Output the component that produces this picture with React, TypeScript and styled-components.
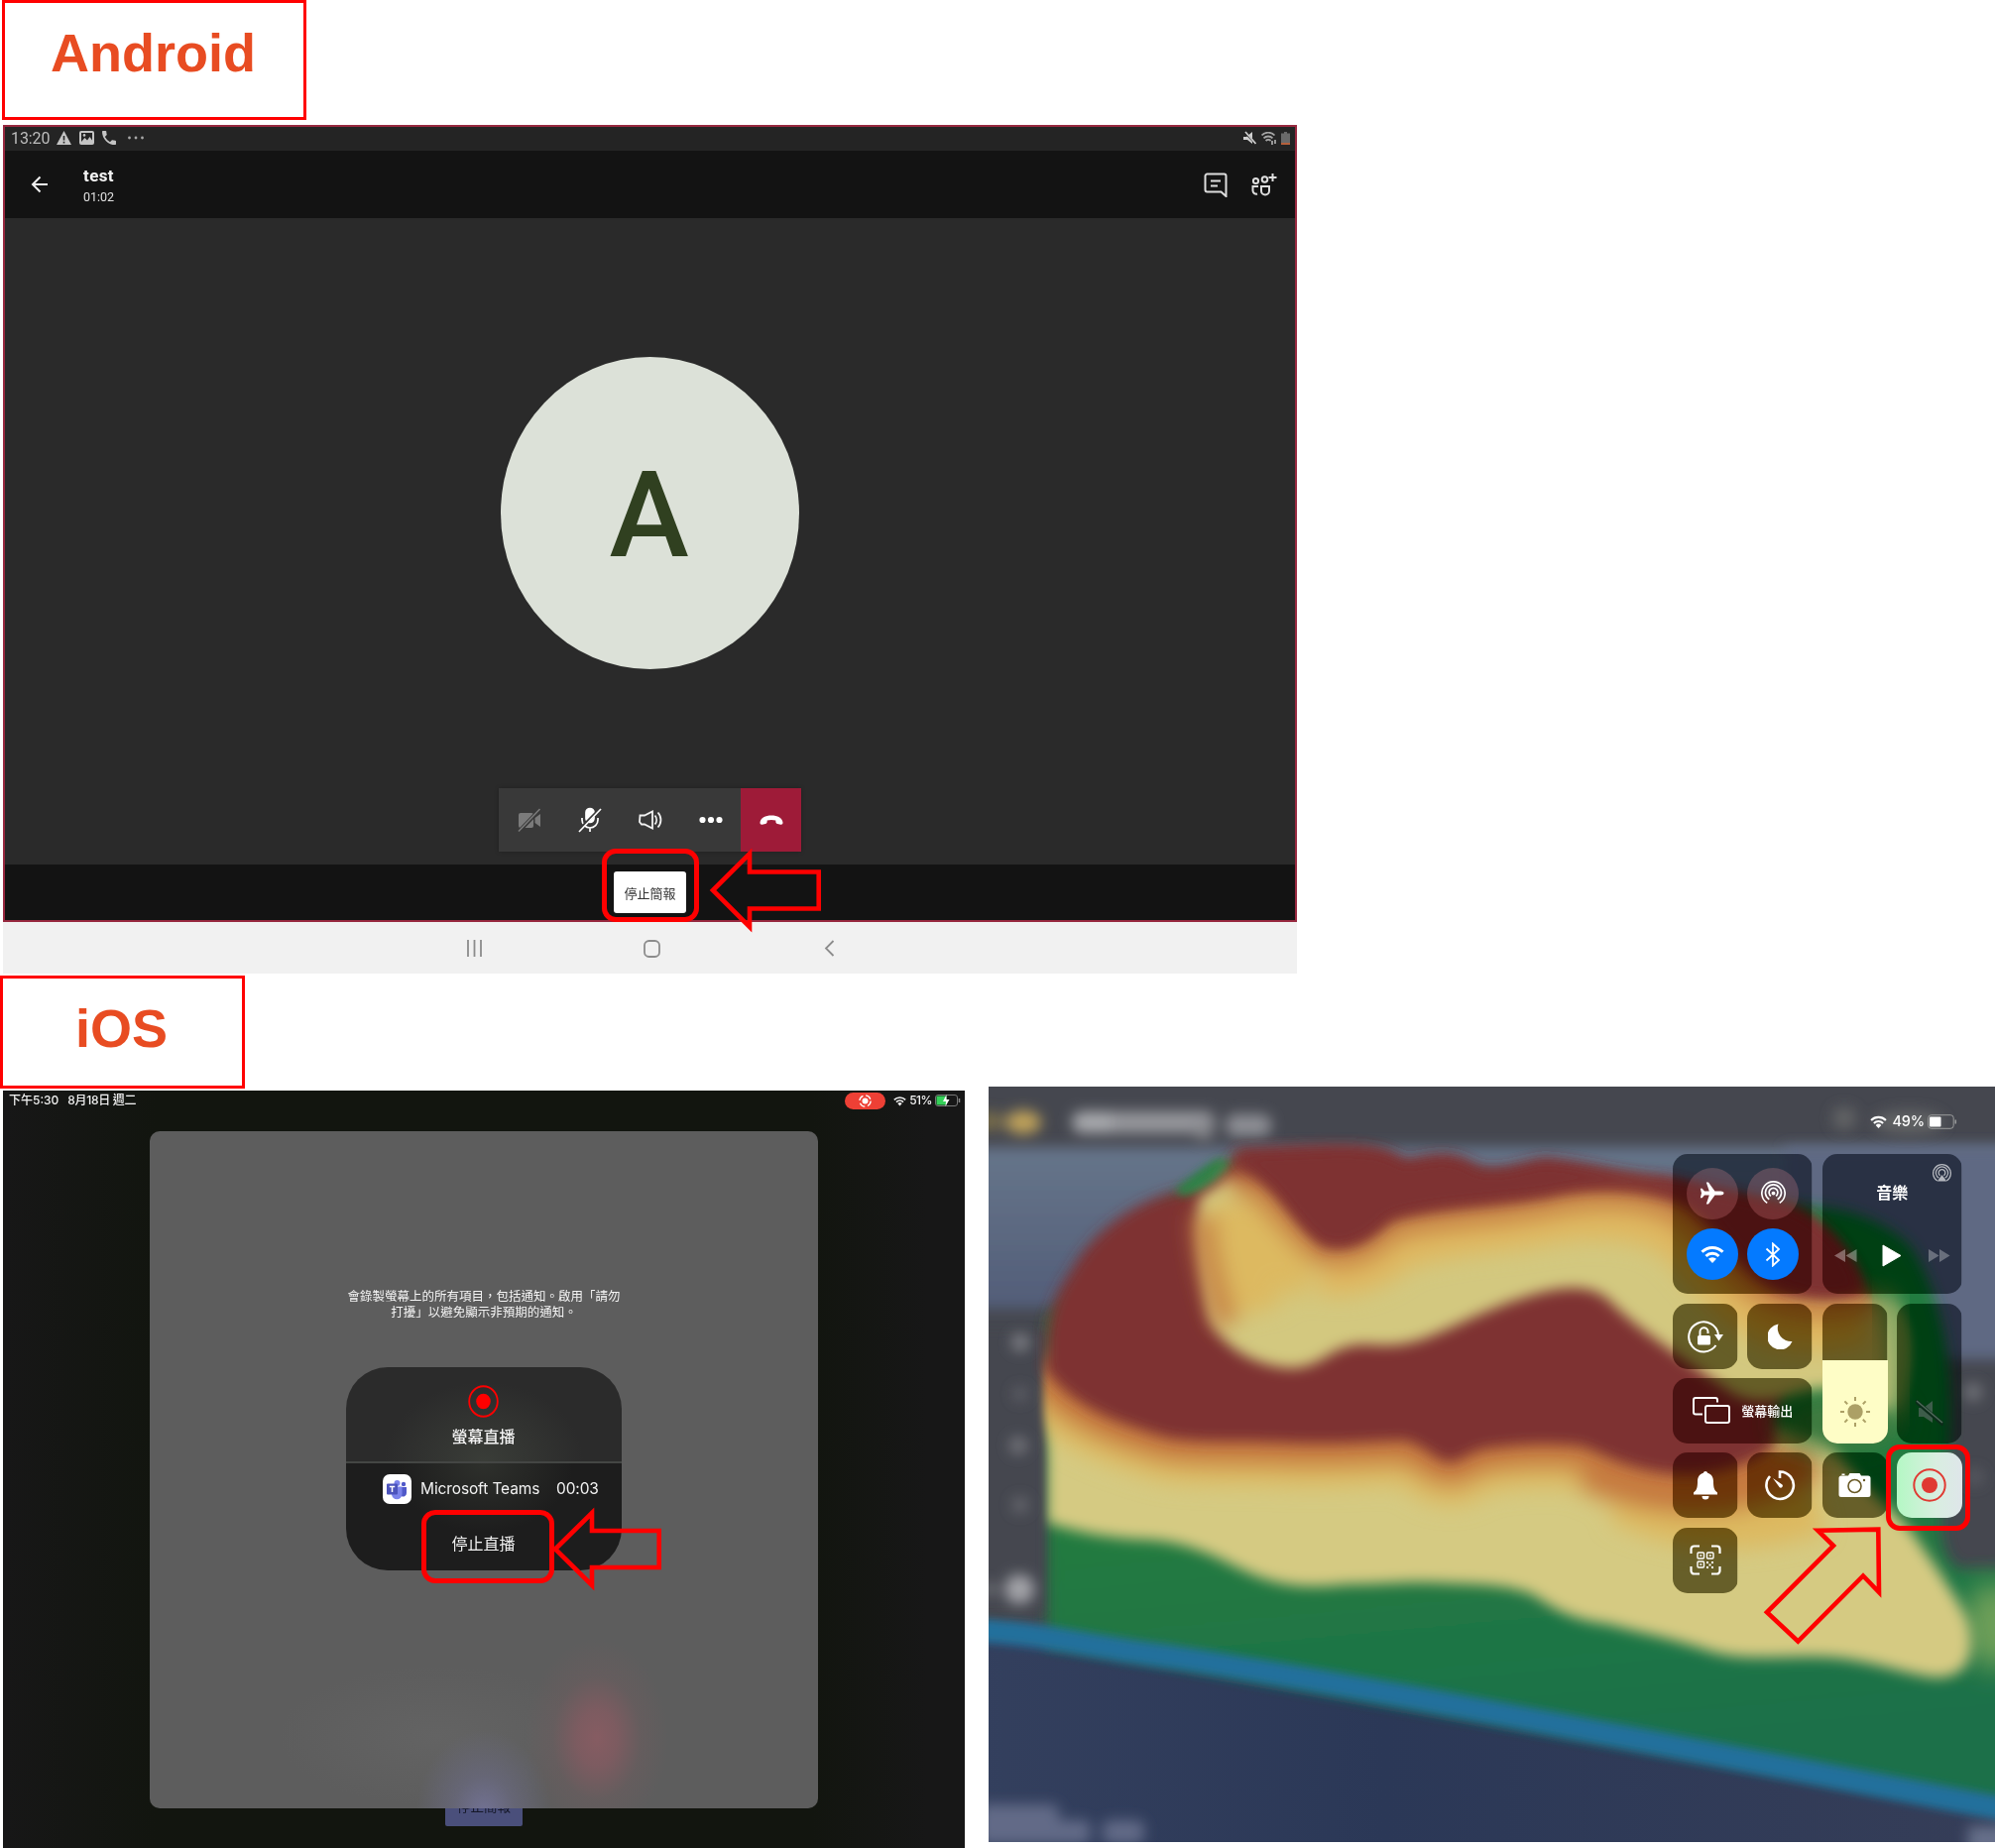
import React from "react";
import styled, { createGlobalStyle } from "styled-components";

const CJK = `"Noto Sans CJK TC", sans-serif`;

const GlobalStyle = createGlobalStyle`
  * { box-sizing: border-box; }
  body { margin: 0; background: #fff; font-family: Roboto, ${CJK}; }
  svg { display: block; flex: none; }
`;

const Page = styled.main`
  width: 2012px;
  height: 1864px;
  display: flex;
  flex-direction: column;
  align-items: flex-start;
  overflow: hidden;
  background: #fff;
`;

const PlatformLabel = styled.h1<{ $w: number; $h: number; $ml: number; $mt: number }>`
  flex: none;
  width: ${(p) => p.$w}px;
  height: ${(p) => p.$h}px;
  margin: ${(p) => p.$mt}px 0 0 ${(p) => p.$ml}px;
  padding: 20px 2px 0 0;
  border: 3px solid #ff0000;
  color: #e84c22;
  font: bold 54px/60px "Liberation Sans", Arial, sans-serif;
  text-align: center;
`;

/* ---------- Annotations ---------- */

const Highlight = styled.div<{ $x: number; $y: number; $w: number; $h: number }>`
  position: absolute;
  z-index: 2;
  left: ${(p) => p.$x}px;
  top: ${(p) => p.$y}px;
  width: ${(p) => p.$w}px;
  height: ${(p) => p.$h}px;
  border: 5px solid #ff0000;
  border-radius: 14px;
`;

const ArrowSvg = styled.svg<{ $x: number; $y: number }>`
  position: absolute;
  z-index: 2;
  left: ${(p) => p.$x}px;
  top: ${(p) => p.$y}px;
  fill: none;
  stroke: #ff0000;
  stroke-width: 4.6;
`;

/* ---------- Android ---------- */

const AndroidShot = styled.section`
  position: relative;
  flex: none;
  width: 1305px;
  height: 856px;
  margin: 5px 0 0 3px;
  display: flex;
  flex-direction: column;
`;

const CallScreen = styled.div`
  height: 804px;
  border: 2px solid #97283f;
  display: flex;
  flex-direction: column;
  background: #2a2a2a;
`;

const StatusBar = styled.div`
  height: 24px;
  padding: 0 5px 2px 6px;
  display: flex;
  align-items: center;
  background: #242424;
  color: #bdbdbd;
  font-size: 16px;
  letter-spacing: -0.1px;
`;

const StatusIcons = styled.div<{ $gap: number; $ml: string }>`
  display: flex;
  align-items: center;
  gap: ${(p) => p.$gap}px;
  margin-left: ${(p) => p.$ml};
`;

const CallHeader = styled.header`
  height: 68px;
  padding: 0 18px 0 26px;
  display: flex;
  align-items: center;
  background: #131313;
  color: #f4f4f4;
`;

const CallTitle = styled.div`
  flex: 1;
  margin-left: 35px;
  padding-top: 2px;
  display: flex;
  flex-direction: column;
`;

const CallName = styled.strong`
  font-size: 17px;
  line-height: 22px;
  letter-spacing: 0.4px;
`;

const CallTime = styled.span`
  font-size: 12.5px;
  line-height: 21px;
  color: #e0e0e0;
`;

const HeaderActions = styled.div`
  display: flex;
  gap: 23px;
`;

const CallBody = styled.div`
  flex: 1;
  display: flex;
  flex-direction: column;
  align-items: center;
  padding-top: 140px;
`;

const Avatar = styled.div`
  width: 301px;
  height: 315px;
  border-radius: 50%;
  background: #dce1d8;
  color: #304020;
  display: flex;
  align-items: center;
  justify-content: center;
  font-size: 121px;
  font-weight: 500;
  line-height: 1;
  padding: 5px 2px 0 0;
`;

const CallControls = styled.div`
  margin-top: 120px;
  display: flex;
  width: 305px;
  height: 64px;
  background: #393939;
  box-shadow: 0 0 4px rgba(0, 0, 0, 0.25);
`;

const ControlButton = styled.div<{ $danger?: boolean }>`
  width: 61px;
  display: flex;
  align-items: center;
  justify-content: center;
  background: ${(p) => (p.$danger ? "#9e1b38" : "transparent")};
`;

const PresentBar = styled.div`
  height: 56px;
  display: flex;
  justify-content: center;
  padding-top: 7px;
  background: #131313;
`;

const StopPresenting = styled.div`
  width: 73px;
  height: 42px;
  border-radius: 3px;
  background: #fff;
  color: #333;
  font: 13px/43px ${CJK};
  text-align: center;
`;

const NavBar = styled.nav`
  flex: 1;
  padding: 1px 0 0 3px;
  display: flex;
  align-items: center;
  justify-content: center;
  gap: 162px;
  background: #f1f1f1;
`;

/* ---------- iOS ---------- */

const IosRow = styled.div`
  display: flex;
  align-items: flex-start;
  height: 768px;
  flex: none;
`;

const BroadcastShot = styled.section`
  position: relative;
  width: 970px;
  height: 764px;
  margin: 2px 0 0 3px;
  display: flex;
  flex-direction: column;
  align-items: center;
  background: linear-gradient(90deg, #171717 0%, #12150f 16%, #12150f 84%, #171717 96%);
  overflow: hidden;
`;

const IosStatus = styled.div`
  align-self: stretch;
  height: 41px;
  padding: 1px 4px 0 6px;
  display: flex;
  align-items: flex-start;
  color: #f2f2f2;
  font: 500 12px/18px Inter, ${CJK};
`;

const IosDate = styled.span`
  margin-left: 9px;
  letter-spacing: -0.3px;
`;

const IosStatusRight = styled.div`
  margin-left: auto;
  height: 18px;
  display: flex;
  align-items: center;
  font-size: 12px;
  letter-spacing: -0.5px;
`;

const RecordPill = styled.div`
  width: 41px;
  height: 17px;
  margin-right: 8px;
  border-radius: 9px;
  background: #ee4035;
  display: flex;
  align-items: center;
  justify-content: center;
`;

const Sheet = styled.div`
  position: relative;
  z-index: 1;
  width: 674px;
  height: 683px;
  border-radius: 10px;
  display: flex;
  flex-direction: column;
  align-items: center;
  padding-top: 158px;
  background:
    radial-gradient(72px 100px at 451px 612px, rgba(134, 92, 98, 1) 0%, rgba(130, 91, 97, 0.85) 28%, rgba(112, 92, 94, 0.4) 62%, transparent 100%),
    radial-gradient(68px 84px at 337px 688px, rgba(114, 114, 148, 1) 0%, rgba(106, 106, 130, 0.65) 45%, transparent 100%),
    radial-gradient(160px 70px at 290px 610px, #636363, transparent),
    #5d5d5d;
`;

const Notice = styled.p`
  margin: 0;
  color: #f4f4f4;
  font: 12.5px/16px ${CJK};
  text-align: center;
  white-space: nowrap;
`;

const Card = styled.div`
  width: 278px;
  height: 205px;
  margin-top: 48px;
  border-radius: 42px;
  overflow: hidden;
  display: flex;
  flex-direction: column;
  color: #f2f2f2;
`;

const CardTop = styled.div`
  height: 97px;
  padding: 18px 1px 0 0;
  border-bottom: 2px solid #444644;
  display: flex;
  flex-direction: column;
  align-items: center;
  gap: 6px;
  background: radial-gradient(100px 80px at 50% 100%, #3a3d38, #2b2b2b);
  font: 500 16px/25px ${CJK};
`;

const CardBottom = styled.div`
  flex: 1;
  display: flex;
  flex-direction: column;
  align-items: center;
  background: radial-gradient(90px 70px at 50% 0, #2e302c, #1d1d1d);
  font: 16px/24px ${CJK};
`;

const AppRow = styled.div`
  align-self: stretch;
  height: 50px;
  padding: 1px 0 0 37px;
  display: flex;
  align-items: center;
  font: 15.5px/20px Inter, sans-serif;
  letter-spacing: -0.12px;
`;

const AppName = styled.span`
  margin-left: 9px;
  width: 137px;
`;

const StopBroadcast = styled.div`
  margin: 18px 1px 0 0;
`;

const PurpleButton = styled.div`
  width: 78px;
  height: 34px;
  margin-top: -16px;
  border-radius: 2px;
  background: #4a4f7b;
  color: #151829;
  font: 13.5px/20px ${CJK};
  text-align: center;
  padding-top: 3px;
`;

const ControlShot = styled.section`
  position: relative;
  width: 1015px;
  height: 762px;
  margin: -2px 0 0 24px;
  overflow: hidden;
  display: flex;
  flex-direction: column;
  align-items: flex-end;
`;

const Backdrop = styled.svg`
  position: absolute;
  inset: 0;
`;

const ControlStatus = styled.div`
  position: relative;
  height: 68px;
  padding: 2px 38px 0 0;
  display: flex;
  align-items: center;
  color: #fff;
  font: 500 14.5px/20px Inter, sans-serif;
  letter-spacing: -0.2px;
`;

const Percent = styled.span<{ $gap: number }>`
  margin: 0 3px 0 ${(p) => p.$gap}px;
`;

const ControlGrid = styled.div`
  position: relative;
  margin-right: 33px;
  display: grid;
  grid-template-columns: repeat(4, 66px);
  grid-auto-rows: 66px;
  gap: 9.33px;
`;

const Tile = styled.div<{ $cols?: number; $rows?: number; $light?: boolean }>`
  grid-column: span ${(p) => p.$cols ?? 1};
  grid-row: span ${(p) => p.$rows ?? 1};
  border-radius: 15px;
  overflow: hidden;
  display: flex;
  align-items: center;
  justify-content: center;
  color: #fff;
  background: ${(p) => (p.$light ? "linear-gradient(90deg, #b4f8c4, #d8eee0 60%, #dfe6ea)" : "rgba(0,0,0,0.1)")};
  backdrop-filter: ${(p) => (p.$light ? "none" : "brightness(0.52) saturate(1.6)")};
`;

const RoundGrid = styled.div`
  display: grid;
  grid-template-columns: 52px 52px;
  gap: 9.5px;
`;

const Round = styled.div<{ $on?: boolean }>`
  width: 52px;
  height: 52px;
  border-radius: 50%;
  display: flex;
  align-items: center;
  justify-content: center;
  background: ${(p) => (p.$on ? "#047aff" : "rgba(255, 150, 160, 0.22)")};
`;

const Music = styled.div`
  align-self: stretch;
  flex: 1;
  display: flex;
  flex-direction: column;
  padding: 10px 12px 27px;
`;

const MusicTitle = styled.div`
  font: 700 16px/24px ${CJK};
  text-align: center;
  margin-top: -3px;
`;

const AirplayRow = styled.div`
  display: flex;
  justify-content: flex-end;
  margin-right: -1px;
`;

const Transport = styled.div`
  margin-top: auto;
  display: flex;
  justify-content: space-between;
  align-items: center;
`;

const Slider = styled.div<{ $fill: number }>`
  align-self: stretch;
  flex: 1;
  display: flex;
  align-items: flex-end;
  justify-content: center;
  padding-bottom: 16px;
  background: linear-gradient(to top, #fefdc6 ${(p) => p.$fill}px, transparent ${(p) => p.$fill}px);
`;

const MirrorText = styled.span`
  margin-left: 11px;
  font: 500 13px/20px ${CJK};
`;

const LeftArrow = ({ x, y, w, h }: { x: number; y: number; w: number; h: number }) => (
  <ArrowSvg $x={x} $y={y} width={w + 4} height={h + 4} viewBox={`0 0 ${w + 4} ${h + 4}`}>
    <path
      d={`M4 ${h / 2} L41 6 V${h / 2 - 18.5} H${w - 2.3} V${h / 2 + 18.5} H41 V${h - 6} Z`}
    />
  </ArrowSvg>
);

const WifiIcon = ({ w, h }: { w: number; h: number }) => (
  <svg width={w} height={h} viewBox="0 0 24 18" fill="none" stroke="currentColor" strokeWidth="3">
    <path d="M1.5 6.8a15 15 0 0 1 21 0M5.5 11a9.3 9.3 0 0 1 13 0" />
    <path d="M12 18l-4-4.2a5.8 5.8 0 0 1 8 0z" fill="currentColor" stroke="none" />
  </svg>
);

const RecordIcon = ({ w, h, color }: { w: number; h: number; color: string }) => (
  <svg width={w} height={h} viewBox="0 0 34 34" preserveAspectRatio="none">
    <circle cx="17" cy="17" r="15.7" fill="none" stroke={color} strokeWidth="2" />
    <circle cx="17" cy="17" r="8" fill={color} />
  </svg>
);

const Rings = ({ size, play }: { size: number; play?: boolean }) => (
  <svg width={size} height={size} viewBox="0 0 24 24" fill="none" stroke="currentColor" strokeWidth="1.6" opacity={play ? 0.65 : 1}>
    <path d="M6 21.5a11.2 11.2 0 1 1 12 0M8 18a7.7 7.7 0 1 1 8 0M9.6 14.8a4.2 4.2 0 1 1 4.8 0" />
    {play ? <path d="M12 14l6 8H6z" fill="currentColor" stroke="none" /> : <circle cx="12" cy="12" r="1.8" fill="currentColor" stroke="none" />}
  </svg>
);

const plateauEdge =
  "M1050 1376 C1075 1412 1110 1432 1181 1451 C1220 1456 1250 1453 1292 1455 C1340 1458 1380 1454 1417 1453 C1440 1460 1450 1476 1464 1475 C1480 1471 1485 1461 1510 1460 C1540 1456 1570 1456 1596 1459 C1620 1468 1640 1482 1687 1487 C1720 1490 1760 1482 1790 1458";
const ridge =
  "M1240 1188 C1284 1200 1292 1235 1330 1263 C1360 1274 1385 1260 1404 1240 C1450 1226 1500 1228 1560 1216 C1600 1206 1650 1204 1687 1222 C1725 1242 1740 1290 1790 1312 C1830 1324 1860 1318 1890 1312";

const Terrain = () => (
  <Backdrop width="1015" height="762" viewBox="997 1096 1015 762">
    <defs>
      <linearGradient id="sky" x1="0" y1="0" x2="0" y2="1">
        <stop offset="0" stopColor="#66758a" />
        <stop offset="1" stopColor="#525d78" />
      </linearGradient>
      <linearGradient id="sea" x1="0" y1="0" x2="1" y2="0">
        <stop offset="0" stopColor="#34405e" />
        <stop offset="0.4" stopColor="#2b3857" />
        <stop offset="1" stopColor="#363e58" />
      </linearGradient>
      <linearGradient id="grass" x1="0" y1="0" x2="0.14" y2="1">
        <stop offset="0" stopColor="#247c3f" />
        <stop offset="0.55" stopColor="#237b40" />
        <stop offset="1" stopColor="#1b6f49" />
      </linearGradient>
      {[4, 7, 11, 14].map((n) => (
        <filter key={n} id={`soft${n}`} x="-50%" y="-50%" width="200%" height="200%">
          <feGaussianBlur stdDeviation={n} />
        </filter>
      ))}
    </defs>
    <rect x="997" y="1096" width="1015" height="762" fill="#45474f" />
    <rect x="960" y="1157" width="1090" height="163" fill="url(#sky)" filter="url(#soft7)" />
    <rect x="1800" y="1157" width="250" height="214" fill="#5e6983" filter="url(#soft7)" />
    <g filter="url(#soft7)">
      <rect x="986" y="1122" width="24" height="18" rx="7" fill="#7a6e4a" />
      <ellipse cx="1032" cy="1132" rx="18" ry="12" fill="#bfa25a" />
      <rect x="1081" y="1121" width="144" height="22" rx="9" fill="#96979c" />
      <rect x="1084" y="1122" width="38" height="20" rx="9" fill="#a9aaae" />
      <rect x="1204" y="1132" width="20" height="18" rx="8" fill="#84858a" />
      <rect x="1236" y="1124" width="46" height="22" rx="9" fill="#8e8f95" />
      <circle cx="1860" cy="1128" r="12" fill="#626365" />
      <ellipse cx="1925" cy="1132" rx="36" ry="12" fill="#626365" />
      <circle cx="1990" cy="1404" r="9" fill="#73767c" />
      <circle cx="1992" cy="1490" r="8" fill="#5a5c64" />
    </g>
    <path d="M960 1650 C1200 1668 1500 1742 2050 1830 V1900 H960 Z" fill="url(#sea)" />
    <path
      d="M1056 1330 V1660 C1200 1680 1500 1740 2050 1828 V1582 H1975 C1945 1560 1962 1500 1966 1450 C1970 1390 1962 1310 1926 1256 C1900 1232 1868 1220 1829 1217 L1240 1172 L1185 1208 Z"
      fill="url(#grass)"
      filter="url(#soft7)"
    />
    <ellipse cx="2012" cy="1640" rx="32" ry="44" fill="#6d9f58" filter="url(#soft14)" />
    <path
      d="M960 1643 C1050 1646 1090 1660 1180 1671 C1320 1692 1500 1726 1680 1760 C1780 1780 1900 1802 2060 1832"
      fill="none"
      stroke="#24709c"
      strokeWidth="24"
      filter="url(#soft4)"
    />
    <path
      d="M1056 1380 V1536 C1090 1546 1120 1552 1158 1553 C1200 1556 1225 1570 1250 1582 C1290 1602 1320 1602 1360 1598 C1400 1598 1420 1594 1460 1597 C1500 1598 1525 1600 1545 1608 C1575 1628 1590 1634 1620 1638 C1660 1648 1690 1654 1720 1664 C1760 1678 1800 1668 1850 1672 C1890 1676 1920 1688 1950 1692 C1990 1694 1992 1660 1984 1634 C1970 1604 1945 1570 1928 1545 C1905 1520 1880 1500 1858 1472 C1840 1440 1820 1440 1790 1440 Z"
      fill="#d5ca82"
      filter="url(#soft7)"
    />
    <g fill="none" filter="url(#soft11)">
      <path d={plateauEdge} stroke="#ddb961" strokeWidth="88" opacity=".95" />
      <path d="M1640 1500 C1700 1530 1760 1530 1830 1510" stroke="#ddb961" strokeWidth="76" />
      <path d={plateauEdge} stroke="#c67a3f" strokeWidth="48" />
      <path d="M1600 1480 C1660 1512 1760 1520 1826 1470" stroke="#c67a3f" strokeWidth="42" />
    </g>
    <path d="M1058 1430 V1530" stroke="#d5ca82" strokeWidth="14" filter="url(#soft4)" />
    <rect x="970" y="1342" width="82" height="283" fill="#45474f" filter="url(#soft4)" />
    <path
      d={`${plateauEdge} L1796 1400 L1810 1340 L1884 1318 C1882 1284 1850 1236 1806 1216 L1680 1188 C1640 1188 1590 1172 1556 1171 C1530 1176 1515 1184 1490 1179 C1465 1162 1450 1166 1417 1173 C1400 1160 1380 1157 1350 1157 C1310 1156 1280 1160 1248 1160 C1232 1190 1210 1200 1185 1202 C1140 1214 1100 1245 1080 1282 C1060 1310 1052 1340 1056 1376 Z`}
      fill="#7e3032"
      filter="url(#soft7)"
    />
    <g filter="url(#soft7)">
      <circle cx="1029" cy="1354" r="9" fill="#808187" />
      <circle cx="1029" cy="1406" r="7" fill="#63646b" />
      <circle cx="1027" cy="1458" r="9" fill="#75767c" />
      <circle cx="1029" cy="1518" r="8" fill="#686970" />
      <circle cx="1028" cy="1603" r="15" fill="#a2a3a8" />
      <circle cx="998" cy="1603" r="6" fill="#808187" />
    </g>
    <ellipse cx="1856" cy="1434" rx="64" ry="28" fill="#3f7a40" filter="url(#soft14)" />
    <path
      d="M1194 1203 C1216 1195 1228 1184 1236 1174 L1228 1172 C1212 1182 1200 1192 1190 1200 Z"
      fill="#2f8247"
      stroke="#2f8247"
      strokeWidth="6"
      filter="url(#soft4)"
    />
    <path
      d="M1210 1208 C1206 1240 1212 1290 1220 1330 C1232 1360 1270 1380 1306 1380 C1340 1376 1340 1356 1380 1356 C1430 1362 1450 1342 1516 1316 C1560 1300 1600 1290 1623 1312 C1650 1340 1690 1364 1745 1404 C1780 1424 1800 1404 1840 1400 C1870 1404 1900 1440 1918 1410 C1928 1370 1928 1330 1905 1312 L1790 1312 C1740 1290 1725 1242 1687 1222 C1650 1206 1600 1206 1560 1216 C1500 1228 1450 1226 1404 1240 C1385 1260 1360 1274 1330 1263 C1296 1238 1284 1200 1240 1188 Z"
      fill="#d3c87f"
      filter="url(#soft7)"
    />
    <g fill="none" filter="url(#soft11)">
      <path d="M1240 1214 C1252 1260 1258 1280 1268 1322" stroke="#ddb961" strokeWidth="50" />
      <path d="M1262 1226 C1280 1250 1290 1275 1320 1290" stroke="#ddb961" strokeWidth="44" />
      <path d="M1214 1226 C1214 1255 1224 1300 1238 1336" stroke="#c67f42" strokeWidth="22" />
      <path d="M1330 1286 C1360 1292 1390 1282 1412 1262 C1460 1246 1510 1246 1560 1236 C1600 1228 1650 1230 1680 1246 C1712 1266 1730 1310 1784 1338 C1820 1348 1850 1346 1880 1336" stroke="#dfb860" strokeWidth="38" />
      <path d={ridge} stroke="#c67a3f" strokeWidth="22" />
    </g>
    <path
      d="M1250 1172 C1298 1196 1300 1230 1336 1254 C1360 1260 1380 1248 1402 1226 C1450 1212 1500 1212 1560 1203 C1600 1193 1650 1193 1700 1208 C1740 1230 1752 1280 1800 1298 C1830 1308 1856 1310 1876 1300 C1864 1262 1840 1236 1806 1220 L1680 1192 C1640 1190 1590 1174 1556 1173 C1530 1178 1515 1186 1490 1181 C1465 1164 1450 1168 1417 1175 C1400 1162 1380 1160 1350 1160 L1250 1164 Z"
      fill="#7e3032"
      stroke="#7e3032"
      strokeWidth="4"
      filter="url(#soft7)"
    />
    <path
      d="M1898 1300 C1914 1330 1922 1380 1912 1430"
      fill="none"
      stroke="#6f9a58"
      strokeWidth="20"
      filter="url(#soft11)"
    />
    <g filter="url(#soft7)" fill="#626b87">
      <rect x="986" y="1820" width="82" height="18" rx="7" />
      <rect x="986" y="1836" width="114" height="24" rx="8" />
      <rect x="1112" y="1836" width="42" height="24" rx="8" />
      <rect x="1985" y="1842" width="60" height="30" fill="#66708a" />
    </g>
  </Backdrop>
);

export default function App() {
  return (
    <Page>
      <GlobalStyle />
      <PlatformLabel $w={307} $h={121} $ml={2} $mt={0}>Android</PlatformLabel>

      <AndroidShot>
        <CallScreen>
          <StatusBar>
            13:20
            <StatusIcons $gap={8} $ml="7px">
              <svg width="15" height="14" viewBox="0 0 15 14">
                <path d="M7.5 0L15 14H0z" fill="#c4c4c4" />
                <path d="M7.5 5v4.5M7.5 10.8v1.6" stroke="#242424" strokeWidth="1.6" />
              </svg>
              <svg width="15" height="14" viewBox="0 0 15 14">
                <rect x="1" y="1" width="13" height="12" rx="1" fill="none" stroke="#c4c4c4" strokeWidth="2" />
                <path d="M2 11l3.5-4 2.5 2.5L10.5 6 13 9.5V12H2z" fill="#c4c4c4" />
                <circle cx="5" cy="4.4" r="1.3" fill="#c4c4c4" />
              </svg>
              <svg width="14" height="14" viewBox="3 3 18 18" fill="#c4c4c4">
                <path d="M6.62 10.79a15.05 15.05 0 0 0 6.59 6.59l2.2-2.2a1 1 0 0 1 1.02-.24c1.12.37 2.33.57 3.57.57a1 1 0 0 1 1 1V20a1 1 0 0 1-1 1A17 17 0 0 1 3 4a1 1 0 0 1 1-1h3.5a1 1 0 0 1 1 1c0 1.25.2 2.45.57 3.57a1 1 0 0 1-.25 1.02z" />
              </svg>
              <svg width="24" height="4" viewBox="0 0 24 4" fill="#a8a8a8">
                <circle cx="5.5" cy="2" r="1.4" />
                <circle cx="12" cy="2" r="1.4" />
                <circle cx="18.5" cy="2" r="1.4" />
              </svg>
            </StatusIcons>
            <StatusIcons $gap={5} $ml="auto">
              <svg width="13" height="14" viewBox="0 0 13 14" fill="#d0d0d0">
                <path d="M0 6h3l6-5v12L4 9H0z" />
                <path d="M1 1l11.5 12" stroke="#242424" strokeWidth="2" />
                <path d="M2 1l10.5 12" stroke="#d0d0d0" strokeWidth="1.6" />
              </svg>
              <svg width="15" height="13" viewBox="0 0 15 13" fill="none" stroke="#a4a4a4" strokeWidth="1.8">
                <path d="M0.5 3.5a9 9 0 0 1 13 0M2.5 6.3a6.5 6.5 0 0 1 9 0M4.6 9a3.5 3.5 0 0 1 5 0M11 9v4M14 8v4" />
              </svg>
              <svg width="9" height="13" viewBox="0 0 9 13">
                <path d="M3 0h3v1.5h3V13H0V1.500h3z" fill="#6a6a6a" />
                <path d="M0 11h9v2H0z" fill="#b5603c" />
              </svg>
            </StatusIcons>
          </StatusBar>
          <CallHeader>
            <svg width="18" height="18" viewBox="0 0 18 18" fill="none" stroke="#f0f0f0" strokeWidth="2">
              <path d="M17 9H2M9.500 1.500L2 9l7.500 7.500" />
            </svg>
            <CallTitle>
              <CallName>test</CallName>
              <CallTime>01:02</CallTime>
            </CallTitle>
            <HeaderActions>
              <svg width="25" height="25" viewBox="0 0 25 25" fill="none" stroke="#dedede" strokeWidth="2">
                <path d="M3.500 1.500h17a2 2 0 0 1 2 2V24l-5-4.500h-14a2 2 0 0 1-2-2v-14a2 2 0 0 1 2-2zM7 8.500h10M7 13.500h7" />
              </svg>
              <svg width="26" height="25" viewBox="0 0 26 25" fill="none" stroke="#dedede" strokeWidth="2">
                <circle cx="4.500" cy="8.500" r="2.600" />
                <circle cx="13.500" cy="7" r="2.800" />
                <path d="M7 14H1.500v4.500a3.500 3.500 0 0 0 4.500 3M10 14h8v4.500a4 4 0 0 1-8 0zM21.500 1v8M17.500 5h8" />
              </svg>
            </HeaderActions>
          </CallHeader>
          <CallBody>
            <Avatar>A</Avatar>
            <CallControls>
              <ControlButton>
                <svg width="24" height="24" viewBox="0 0 24 24" fill="#7b7b7b">
                  <rect x="1" y="5" width="15" height="15" rx="2" />
                  <path d="M17.500 10L23 6v13l-5.500-4z" />
                  <path d="M1 24L23 1" stroke="#393939" strokeWidth="4" />
                  <path d="M1 23.500L22.500 1" stroke="#7b7b7b" strokeWidth="1.500" />
                </svg>
              </ControlButton>
              <ControlButton>
                <svg width="24" height="26" viewBox="0 0 24 26" fill="none" stroke="#fff" strokeWidth="1.700">
                  <rect x="8" y="1.500" width="8" height="14" rx="4" fill="#fff" />
                  <path d="M4 11v2a8 8 0 0 0 16 0v-2M12 21v4" />
                  <path d="M0 24L22 2" stroke="#393939" strokeWidth="3" />
                  <path d="M1 25L23 2" />
                </svg>
              </ControlButton>
              <ControlButton>
                <svg width="24" height="20" viewBox="0 0 24 20" fill="none" stroke="#f2f2f2" strokeWidth="1.800">
                  <path d="M1.500 5.500h4.500L14 1.500v17L6 14.500H3L1 12zM16.500 5.500a7 7 0 0 1 0 9M19.500 2.500a11 11 0 0 1 0 15" />
                </svg>
              </ControlButton>
              <ControlButton>
                <svg width="24" height="8" viewBox="0 0 24 8" fill="#fff">
                  <circle cx="3.500" cy="4" r="3.100" />
                  <circle cx="12" cy="4" r="3.100" />
                  <circle cx="20.500" cy="4" r="3.100" />
                </svg>
              </ControlButton>
              <ControlButton $danger>
                <svg width="24" height="11" viewBox="0 0 24 11" fill="#fff">
                  <path d="M0.500 7.500C1 3 6 0.500 12 0.500S23 3 23.500 7.500c.1 1.600-.8 2.400-2.200 2.200l-3.200-.6c-1.100-.2-1.600-.9-1.700-2l-.1-1.600c-2.800-.8-5.800-.8-8.600 0l-.1 1.600c-.1 1.100-.6 1.800-1.700 2l-3.200.6C1.300 9.900.4 9.100.5 7.500z" />
                </svg>
              </ControlButton>
            </CallControls>
          </CallBody>
          <PresentBar>
            <StopPresenting>停止簡報</StopPresenting>
          </PresentBar>
        </CallScreen>
        <NavBar>
          <svg width="17" height="17" viewBox="0 0 17 17" stroke="#8c8c8c" strokeWidth="1.800">
            <path d="M2 0v17M8.500 0v17M15 0v17" />
          </svg>
          <svg width="17" height="18" viewBox="0 0 17 18" fill="none" stroke="#8c8c8c" strokeWidth="1.800">
            <rect x="1" y="1" width="15" height="16" rx="4.500" />
          </svg>
          <svg width="17" height="17" viewBox="0 0 17 17" fill="none" stroke="#8c8c8c" strokeWidth="1.800">
            <path d="M12.500 1L5 8.500l7.500 7.500" />
          </svg>
        </NavBar>
        <Highlight $x={604} $y={730} $w={98} $h={74} />
        <LeftArrow x={712} y={729} w={113} h={86} />
      </AndroidShot>

      <PlatformLabel $w={247} $h={114} $ml={0} $mt={2}>iOS</PlatformLabel>

      <IosRow>
        <BroadcastShot>
          <IosStatus>
            <span>下午5:30</span>
            <IosDate>8月18日 週二</IosDate>
            <IosStatusRight>
              <RecordPill>
                <svg width="13" height="13" viewBox="0 0 13 13" fill="none" stroke="#fff" strokeWidth="1.300">
                  <circle cx="6.500" cy="6.500" r="5.600" strokeDasharray="6 2.800" />
                  <circle cx="6.500" cy="6.500" r="3" fill="#fff" stroke="none" />
                </svg>
              </RecordPill>
              <WifiIcon w={13} h={11} />
              <Percent $gap={3}>51%</Percent>
              <svg width="26" height="12" viewBox="0 0 26 12">
                <rect x=".5" y=".5" width="22" height="11" rx="2.500" fill="none" stroke="#777" />
                <rect x="1.500" y="1.500" width="10" height="9" rx="1" fill="#34d058" />
                <path d="M11.500 0L8 7h3l-.5 5L14.500 5h-3z" fill="#fff" />
                <path d="M24.500 4v4" stroke="#888" strokeWidth="1.500" />
              </svg>
            </IosStatusRight>
          </IosStatus>
          <Sheet>
            <Notice>
              會錄製螢幕上的所有項目，包括通知。啟用「請勿
              <br />
              打擾」以避免顯示非預期的通知。
            </Notice>
            <Card>
              <CardTop>
                <RecordIcon w={31} h={33} color="#ff0000" />
                <span>螢幕直播</span>
              </CardTop>
              <CardBottom>
                <AppRow>
                  <svg width="29" height="30" viewBox="0 0 29 30">
                    <rect width="29" height="30" rx="7" fill="#fff" />
                    <circle cx="21" cy="10" r="2.200" fill="#5059c9" />
                    <circle cx="14.500" cy="9" r="3" fill="#7b83eb" />
                    <path d="M18 13h6v6a3.500 3.500 0 0 1-5 3.200z" fill="#5059c9" />
                    <path d="M9 12.500h10.500V20a5.200 5.200 0 0 1-10.500 0z" fill="#7b83eb" />
                    <rect x="4" y="9.500" width="11" height="11" rx="1" fill="#4b53bc" />
                    <path d="M6.800 12.500h5.400M9.500 12.500v5.500" stroke="#fff" strokeWidth="1.500" />
                  </svg>
                  <AppName>Microsoft Teams</AppName>
                  <span>00:03</span>
                </AppRow>
                <StopBroadcast>停止直播</StopBroadcast>
              </CardBottom>
            </Card>
          </Sheet>
          <PurpleButton>停止簡報</PurpleButton>
          <Highlight $x={422} $y={423} $w={134} $h={74} />
          <LeftArrow x={553} y={420} w={111} h={85} />
        </BroadcastShot>

        <ControlShot>
          <Terrain />
          <ControlStatus>
            <WifiIcon w={17} h={13} />
            <Percent $gap={6}>49%</Percent>
            <svg width="30" height="15" viewBox="0 0 30 15">
              <rect x=".7" y=".7" width="25.500" height="13.600" rx="3" fill="none" stroke="#9a9c9c" />
              <rect x="2" y="2.500" width="11.500" height="10" rx="1" fill="#fff" />
              <path d="M28.300 5.500v4" stroke="#9a9c9c" strokeWidth="1.500" />
            </svg>
          </ControlStatus>
          <ControlGrid>
            <Tile $cols={2} $rows={2}>
              <RoundGrid>
                <Round>
                  <svg width="25" height="23" viewBox="0 0 25 23" fill="#fff">
                    <path d="M24.500 11.500c0-1.200-1.500-1.900-3-1.900h-6L9 .5H6.800l3 9.100H5L2.700 6.700H.8L2 11.500.8 16.300h1.900L5 13.400h4.800l-3 9.100H9l6.500-9.100h6c1.500 0 3-.7 3-1.900z" />
                  </svg>
                </Round>
                <Round>
                  <Rings size={25} />
                </Round>
                <Round $on>
                  <WifiIcon w={24} h={18} />
                </Round>
                <Round $on>
                  <svg width="16" height="25" viewBox="0 0 16 25" fill="none" stroke="#fff" strokeWidth="1.800">
                    <path d="M1.500 6.500L14 18l-6 5.500v-22L14 7 1.500 18.500" />
                  </svg>
                </Round>
              </RoundGrid>
            </Tile>
            <Tile $cols={2} $rows={2}>
              <Music>
                <AirplayRow>
                  <Rings size={19} play />
                </AirplayRow>
                <MusicTitle>音樂</MusicTitle>
                <Transport>
                  <svg width="23" height="13" viewBox="0 0 23 13" fill="#fff" opacity=".35">
                    <path d="M11 0v13L0 6.500zM22.500 0v13l-11-6.500z" />
                  </svg>
                  <svg width="20" height="23" viewBox="0 0 20 23" fill="#fff" stroke="#fff" strokeLinejoin="round">
                    <path d="M1 1v21l18-10.500z" />
                  </svg>
                  <svg width="23" height="13" viewBox="0 0 23 13" fill="#fff" opacity=".3">
                    <path d="M1 0v13l10.500-6.500zM12 0v13l10.500-6.500z" />
                  </svg>
                </Transport>
              </Music>
            </Tile>
            <Tile>
              <svg width="36" height="34" viewBox="0 0 36 34" fill="none" stroke="#fff" strokeWidth="2">
                <path d="M28.500 26A15 15 0 1 1 31 15" />
                <path d="M27 15h9l-4.500 6.500z" fill="#fff" stroke="none" />
                <rect x="10" y="16" width="13" height="9.500" rx="1.500" fill="#fff" stroke="none" />
                <path d="M12.500 16v-3.500a4 4 0 0 1 8-.5v2" />
              </svg>
            </Tile>
            <Tile>
              <svg width="25" height="26" viewBox="0 0 25 26" fill="#fff">
                <path d="M10.500.5A13.300 13.300 0 0 0 24.500 18 13 13 0 1 1 10.500.5z" />
              </svg>
            </Tile>
            <Tile $rows={2}>
              <Slider $fill={84}>
                <svg width="32" height="32" viewBox="0 0 32 32">
                  <circle cx="16" cy="16" r="7.700" fill="#aca066" />
                  <path
                    d="M16 1v4M16 27v4M1 16h4M27 16h4M5.400 5.400l2.800 2.800M23.800 23.800l2.800 2.800M5.400 26.600l2.800-2.800M23.800 8.200l2.800-2.800"
                    stroke="#aca066"
                    strokeWidth="2"
                  />
                </svg>
              </Slider>
            </Tile>
            <Tile $rows={2}>
              <Slider $fill={0}>
                <svg width="28" height="32" viewBox="0 0 28 32">
                  <path d="M3 12h5l9-7v22l-9-6H3z" fill="#3d5c4a" />
                  <path d="M0 5l28 24" stroke="#0c2c1a" strokeWidth="4" />
                  <path d="M1 5l26 22" stroke="#4f6a5a" strokeWidth="1.600" />
                </svg>
              </Slider>
            </Tile>
            <Tile $cols={2}>
              <svg width="38" height="27" viewBox="0 0 38 27" fill="none" stroke="#fff" strokeWidth="2">
                <path d="M10 17.500H3a2 2 0 0 1-2-2V3a2 2 0 0 1 2-2h20a2 2 0 0 1 2 2v2.500" />
                <rect x="13" y="9" width="24" height="17" rx="2" />
              </svg>
              <MirrorText>螢幕輸出</MirrorText>
            </Tile>
            <Tile>
              <svg width="24" height="29" viewBox="0 0 24 29" fill="#fff">
                <path d="M12 0a2.300 2.300 0 0 0-2.200 1.800C6 2.800 4 6 4 10.500c0 6.500-1 8.500-4 11V23.500h24v-2c-3-2.500-4-4.500-4-11 0-4.500-2-7.700-5.800-8.700A2.300 2.300 0 0 0 12 0zM8.500 25h7a3.500 3.500 0 0 1-7 0z" />
              </svg>
            </Tile>
            <Tile>
              <svg width="32" height="32" viewBox="0 0 32 32" fill="none" stroke="#fff" strokeWidth="2.600">
                <path d="M16 9V2.500A13.700 13.700 0 1 1 6 7" />
                <path d="M9 9l9.500 6.500a2 2 0 0 1-2.800 2.800z" fill="#fff" stroke="none" />
              </svg>
            </Tile>
            <Tile>
              <svg width="33" height="26" viewBox="0 0 33 26">
                <path
                  d="M3 3.500h7L11.500 1h10L23 3.500h7a2.500 2.500 0 0 1 2.500 2.500v16.500A2.500 2.500 0 0 1 30 25H3A2.500 2.500 0 0 1 .5 22.500V6A2.500 2.500 0 0 1 3 3.500z"
                  fill="#fff"
                />
                <path d="M3.500 2.200h3" stroke="#fff" strokeWidth="1.600" />
                <circle cx="16.500" cy="14" r="6.500" fill="none" stroke="#6a5a26" strokeWidth="1.600" />
                <circle cx="26" cy="8" r="1.200" fill="#6a5a26" />
              </svg>
            </Tile>
            <Tile $light>
              <RecordIcon w={34} h={34} color="#e03a32" />
            </Tile>
            <Tile>
              <svg width="32" height="31" viewBox="0 0 32 31" fill="none" stroke="#fff" strokeWidth="2.200">
                <path d="M1.500 9V4.500a3 3 0 0 1 3-3H10M22 1.500h5.500a3 3 0 0 1 3 3V9M30.500 22v4.500a3 3 0 0 1-3 3H22M10 29.500H4.500a3 3 0 0 1-3-3V22" />
                <g strokeWidth="1.400">
                  <rect x="8" y="8" width="6.500" height="6" rx="1" />
                  <rect x="17.500" y="8" width="6.500" height="6" rx="1" />
                  <rect x="8" y="17" width="6.500" height="6" rx="1" />
                </g>
                <path d="M17 17h2v2h-2zM22 17h2v2h-2zM19.500 19.500h2v2h-2zM17 22h2v2h-2zM22 22h2v2h-2z" fill="#fff" stroke="none" />
                <path d="M10.300 11h2M19.800 11h2M10.300 20h2" strokeWidth="1.500" />
              </svg>
            </Tile>
          </ControlGrid>
          <Highlight $x={905} $y={361} $w={85} $h={87} />
          <ArrowSvg $x={780} $y={440} width="124" height="126" viewBox="1777 1536 124 126">
            <path d="M1833.300 1543.700L1894.300 1542.700 1895 1606 1879 1589.500 1813.300 1655.500 1782 1626.300 1849 1559z" />
          </ArrowSvg>
        </ControlShot>
      </IosRow>
    </Page>
  );
}
